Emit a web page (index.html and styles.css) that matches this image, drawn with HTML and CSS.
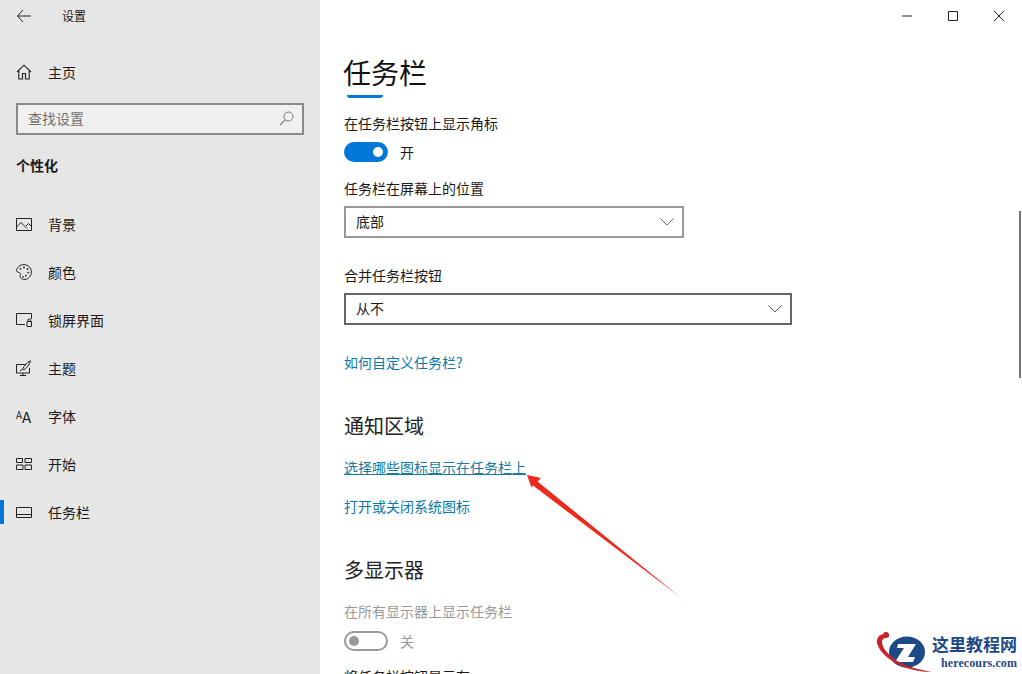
FILE: index.html
```html
<!DOCTYPE html>
<html lang="zh-CN">
<head>
<meta charset="utf-8">
<title>设置</title>
<link rel="stylesheet" href="styles.css">
</head>
<body>
<div class="window">
  <aside class="sidebar">
    <div class="appbar">
      <svg class="back" width="16" height="14" viewBox="0 0 16 14"><path d="M7 1 1.500 7 7 13M1.500 7H15" fill="none" stroke="#222" stroke-width="1"/></svg>
      <span class="apptitle">设置</span>
    </div>
    <div class="navrow home">
      <svg class="navicon" width="16" height="16" viewBox="0 0 16 16"><path d="M1 8 8 1.200 15 8M2.800 6.500V15H6.500V9.500H9.500V15H13.200V6.500" fill="none" stroke="#222" stroke-width="1.100"/></svg>
      <span>主页</span>
    </div>
    <div class="search">
      <span class="placeholder">查找设置</span>
      <svg width="15" height="15" viewBox="0 0 15 15"><circle cx="9.500" cy="5.500" r="4.500" fill="none" stroke="#777" stroke-width="1"/><path d="M6.200 8.800 1 14" stroke="#777" stroke-width="1.100"/></svg>
    </div>
    <div class="section">个性化</div>
    <nav class="nav">
      <div class="navrow">
        <svg class="navicon" width="16" height="13" viewBox="0 0 16 13"><path d="M.5.500h15v12H.5zM.5 9 5 4.500l6 6M10 8l2.500-2.500 3 3" fill="none" stroke="#222"/></svg>
        <span>背景</span>
      </div>
      <div class="navrow">
        <svg class="navicon" width="16" height="16" viewBox="0 0 16 16"><path d="M8 .6C3.800.6.600 3.600.600 6.600c0 2.200 3.400 1.600 3.900 2.800.5 1.400-1.200 2.400-.2 4 1 1.600 3 2.200 4.700 2 3.600-.4 6.400-3.600 6.400-7.300C15.400 3.800 12.200.6 8 .6z" fill="none" stroke="#222"/><circle cx="4.500" cy="4.800" r=".9" fill="#222"/><circle cx="8" cy="3.400" r=".9" fill="#222"/><circle cx="11.500" cy="5" r=".9" fill="#222"/><circle cx="12.300" cy="8.600" r=".9" fill="#222"/><circle cx="9.800" cy="11.600" r=".9" fill="#222"/><circle cx="7" cy="12.800" r=".9" fill="#222"/></svg>
        <span>颜色</span>
      </div>
      <div class="navrow">
        <svg class="navicon" width="16" height="14" viewBox="0 0 16 14"><path d="M9 11.500H.5V.5h15v5.500M11 13.500V8.500h4.500v5zM12 8.500V7a1.200 1.200 0 0 1 2.500 0v1.500" fill="none" stroke="#222"/></svg>
        <span>锁屏界面</span>
      </div>
      <div class="navrow">
        <svg class="navicon" width="16" height="16" viewBox="0 0 16 16"><path d="M10 4.500H.5v8.500h13V8M7 13v2M4 15.500h6M14.500.8C11 2.500 8.500 5.500 6.500 9l1 1c3.500-2 5.800-5 7-9.200zM6.500 9 4 11" fill="none" stroke="#222"/></svg>
        <span>主题</span>
      </div>
      <div class="navrow">
        <span class="aa"><small>A</small>A</span>
        <span>字体</span>
      </div>
      <div class="navrow">
        <svg class="navicon" width="16" height="12" viewBox="0 0 16 12"><path d="M.5.500h6v4h-6zM9 .5h6.500v4H9zM.5 7h6.500v4.500H.5zM9 7h6.500v4.500H9z" fill="none" stroke="#222"/></svg>
        <span>开始</span>
      </div>
      <div class="navrow active">
        <svg class="navicon" width="16" height="11" viewBox="0 0 16 11"><path d="M.5.500h15v10H.5zM.5 7.500h15" fill="none" stroke="#222"/></svg>
        <span>任务栏</span>
      </div>
    </nav>
  </aside>

  <main class="main">
    <div class="controls">
      <div class="ctl"><svg width="12" height="12" viewBox="0 0 12 12"><path d="M1 6h10" stroke="#222"/></svg></div>
      <div class="ctl"><svg width="12" height="12" viewBox="0 0 12 12"><path d="M1.500 1.500h9v9h-9z" fill="none" stroke="#222"/></svg></div>
      <div class="ctl"><svg width="12" height="12" viewBox="0 0 12 12"><path d="M1 1l10 10M11 1 1 11" stroke="#222"/></svg></div>
    </div>
    <div class="content">
      <h1 class="title">任务栏</h1>
      <div class="sliver"></div>
      <div class="label l-badge">在任务栏按钮上显示角标</div>
      <div class="toggle-row">
        <span class="toggle on"><i></i></span><span>开</span>
      </div>
      <div class="label l-pos">任务栏在屏幕上的位置</div>
      <div class="select narrow">
        <span>底部</span>
        <svg width="14" height="8" viewBox="0 0 14 8"><path d="M.5.500 7 7l6.500-6.500" fill="none" stroke="#666"/></svg>
      </div>
      <div class="label l-merge">合并任务栏按钮</div>
      <div class="select wide">
        <span>从不</span>
        <svg width="14" height="8" viewBox="0 0 14 8"><path d="M.5.500 7 7l6.500-6.500" fill="none" stroke="#555"/></svg>
      </div>
      <a class="link l-help">如何自定义任务栏?</a>
      <h2 class="heading h-notify">通知区域</h2>
      <a class="link hover l-icons">选择哪些图标显示在任务栏上</a>
      <a class="link l-sys">打开或关闭系统图标</a>
      <h2 class="heading h-multi">多显示器</h2>
      <div class="label disabled l-all">在所有显示器上显示任务栏</div>
      <div class="toggle-row disabled">
        <span class="toggle off"><i></i></span><span>关</span>
      </div>
      <div class="label l-show">将任务栏按钮显示在</div>
    </div>
    <div class="scrollbar"></div>
  </main>

  <svg class="arrow" width="160" height="126" viewBox="525 473 160 126">
    <path d="M527 475 541 478 537.500 481.500 680 597 533 485.500 531.500 487.500z" fill="#ee2a1c"/>
  </svg>

  <div class="logo">
    <svg width="58" height="44" viewBox="0 0 58 44">
      <ellipse cx="33" cy="22" rx="18" ry="15.500" fill="#1d4a86"/>
      <path d="M24 14H42L34 27H41L39 32H21L30 18H23z" fill="#fff"/>
      <path d="M14 4C7 3 2 7 3 13c2 9 13 18 26 24 9 3 20 5 29 5-11-2-24-5-33-10C15 26 8 18 8 12c0-3 3-5 7-5z" fill="#c8232a"/>
      <circle cx="12" cy="5" r="3" fill="#c8232a"/>
    </svg>
    <div class="logotext">
      <div class="logo-cn">这里教程网</div>
      <div class="logo-en">herecours.com</div>
    </div>
  </div>
</div>
</body>
</html>
```

FILE: styles.css
```css
* { box-sizing: border-box; }
html, body { margin: 0; height: 100%; overflow: hidden; }
body {
  font-family: "Noto Sans CJK SC", "Noto Sans", sans-serif;
  font-size: 14px;
  line-height: 20px;
  color: #1a1a1a;
  background: #fff;
}
.window { position: relative; display: flex; width: 1022px; height: 674px; overflow: hidden; }

.sidebar { width: 320px; flex: none; background: #e6e6e6; }
.appbar { display: flex; align-items: center; height: 32px; padding-left: 16px; }
.apptitle { margin-left: 30px; font-size: 12px; }
.back { flex: none; }

.navrow { position: relative; display: flex; align-items: center; height: 48px; padding-left: 16px; }
.navrow > span:last-child { margin-left: 16px; }
.navicon { flex: none; width: 16px; }
.home { margin-top: 16px; }
.active::before { content: ""; position: absolute; left: 0; top: 12px; width: 4px; height: 24px; background: #0078d7; }
.aa { display: block; width: 16px; font-size: 15px; line-height: 16px; }
.aa small { font-size: 10px; vertical-align: 4px; }

.search {
  display: flex; align-items: center; justify-content: space-between;
  height: 32px; width: 288px; margin: 7px 0 0 16px; padding: 0 8px 2px 10px;
  background: #f0f0f0; border: 2px solid #8a8a8a;
}
.placeholder { color: #707070; }
.section { margin: 20px 0 0 16px; font-weight: 700; }
.nav { margin-top: 25px; }

.main { position: relative; flex: 1; min-width: 0; background: #fff; }
.controls { display: flex; justify-content: flex-end; height: 32px; }
.ctl { display: flex; align-items: center; justify-content: center; width: 46px; height: 32px; }
.content { padding-left: 24px; }
.title { margin: 20px 0 0; font-size: 28px; font-weight: 400; line-height: 40px; color: #111; text-indent: -1px; }
.sliver { width: 36px; height: 3px; margin: 3px 0 0 3px; background: #0078d7; border-radius: 0 0 10px 10px; }
.l-badge { margin-top: 15px; }
.toggle-row { display: flex; align-items: center; gap: 12px; height: 20px; margin-top: 9px; }
.toggle { display: flex; align-items: center; width: 44px; height: 20px; border-radius: 10px; padding: 0 5px; }
.toggle i { width: 10px; height: 10px; border-radius: 50%; }
.toggle.on { justify-content: flex-end; background: #0078d7; }
.toggle.on i { background: #fff; }
.toggle.off { border: 2px solid #999; padding: 0 3px; }
.toggle.off i { background: #999; }
.disabled { color: #999; }
.l-pos { margin-top: 16px; }
.select {
  display: flex; align-items: center; justify-content: space-between;
  height: 32px; padding: 0 8px 0 10px; background: #fff; border: 2px solid #999;
}
.select span { margin-bottom: 2px; }
.narrow { width: 340px; margin-top: 8px; }
.wide { width: 448px; margin-top: 8px; border-color: #666; }
.l-merge { margin-top: 27px; }
.link { display: block; color: #0a78a8; }
.l-help { margin-top: 27px; }
.hover { text-decoration: underline; color: #1878a0; }
.heading { margin: 0; font-size: 20px; font-weight: 400; line-height: 28px; color: #222; }
.h-notify { margin-top: 40px; }
.l-icons { margin-top: 17px; }
.l-sys { margin-top: 19px; }
.h-multi { margin-top: 40px; }
.l-all { margin-top: 17px; }
.toggle-row.disabled { margin-top: 10px; }
.l-show { margin-top: 15px; }

.scrollbar { position: absolute; right: 1px; top: 211px; width: 2px; height: 167px; background: #777; }

.arrow { position: absolute; left: 525px; top: 473px; }

.logo { position: absolute; left: 874px; top: 630px; display: flex; width: 148px; height: 44px; background: #fff; }
.logo svg { flex: none; }
.logo-cn { font-size: 17px; line-height: 24px; font-weight: 700; color: #1d4a86; white-space: nowrap; margin-top: 2px; }
.logo-en { font-family: "Liberation Serif", serif; font-size: 12px; line-height: 14px; font-weight: 700; color: #1d4a86; letter-spacing: .1px; padding-left: 9px; white-space: nowrap; }
```
